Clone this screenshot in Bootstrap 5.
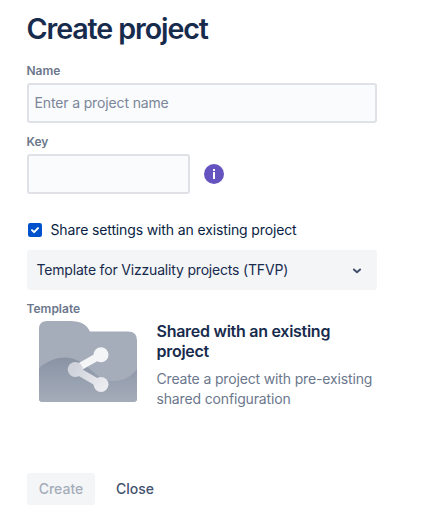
<!DOCTYPE html>
<html lang="en">
<head>
<meta charset="utf-8">
<meta name="viewport" content="width=device-width, initial-scale=1">
<title>Create project</title>
<link href="https://cdn.jsdelivr.net/npm/bootstrap@5.3.0/dist/css/bootstrap.min.css" rel="stylesheet">
<style>
body{font-family:Inter,"Liberation Sans",sans-serif;font-size:14px;line-height:20px;color:#172b4d;background:#fff}
.page{width:424px;height:527px;padding:13px 47px 0 27px;overflow:hidden}
.page-title{font-size:28.6px;line-height:32px;font-weight:600;letter-spacing:-1.08px;margin:0 0 18px -.5px}
.field-label{display:block;font-size:12px;line-height:16px;font-weight:600;color:#6b778c;letter-spacing:0;margin-left:-.5px}
.field-input{height:40px;border:2px solid #dfe1e6;border-radius:3px;background:#fafbfc;padding:0 5.5px 1px;font-size:14px;letter-spacing:-.14px}
.field-input::placeholder{color:#7a869a;opacity:1}
.key-label{margin-top:11px}
.key-input{width:163px}
.info{width:20px;height:20px;margin-left:14px}
.share-check{margin-top:26px;height:20px;padding-left:1px;color:#091e42;letter-spacing:-.13px}
.share-check svg{margin-right:8.5px}
.project-select{height:40px;margin-top:10px;border:0;border-radius:3px;background:#f4f5f7;padding:0 10px 1px 9.5px;color:#172b4d;font-size:14px;letter-spacing:-.18px}
.template-label{margin-top:11px}
.template-row{padding:4px 0 0 12px;height:156px}
.template-text{margin-left:19.500px;width:222px}
.template-title{font-size:16px;line-height:20px;font-weight:600;letter-spacing:-.27px;margin:0 0 8px}
.template-desc{color:#6b778c;letter-spacing:-.15px;margin:0}
.action{height:32px;padding:0;border:0;border-radius:3px;font-size:14px;line-height:32px;font-weight:500}
.action-create{width:68px;background:#f4f5f7;color:#a5adba}
.action-close{width:80px;color:#42526e}
</style>
</head>
<body>
<main class="page">
  <h1 class="page-title">Create project</h1>
  <label class="field-label" for="name">Name</label>
  <input class="field-input form-control mt-1" id="name" placeholder="Enter a project name">
  <label class="field-label key-label" for="key">Key</label>
  <div class="d-flex align-items-center mt-1">
    <input class="field-input form-control key-input" id="key">
    <svg class="info" viewBox="0 0 20 20"><circle cx="10" cy="10" r="10" fill="#6554c0"/><rect x="9" y="8" width="2" height="7" fill="#fff"/><rect x="9" y="5" width="2" height="2" rx=".3" fill="#fff"/></svg>
  </div>
  <div class="share-check d-flex align-items-center">
    <svg width="14" height="14" viewBox="0 0 14 14" role="checkbox" aria-checked="true"><rect width="14" height="14" rx="2.2" fill="#0052cc"/><path d="M4 7.1 6.1 9.1 10 5.1" fill="none" stroke="#fff" stroke-width="2" stroke-linecap="round" stroke-linejoin="round"/></svg>
    <span>Share settings with an existing project</span>
  </div>
  <button class="project-select btn w-100 d-flex align-items-center justify-content-between" type="button">
    <span>Template for Vizzuality projects (TFVP)</span>
    <svg width="20" height="20" viewBox="0 0 20 20"><path d="M6.9 9.500 10 12.300 13.1 9.500" fill="none" stroke="#42526e" stroke-width="2" stroke-linecap="round" stroke-linejoin="round"/></svg>
  </button>
  <div class="field-label template-label">Template</div>
  <div class="template-row d-flex align-items-start">
    <svg class="flex-shrink-0" width="98" height="82" viewBox="0 0 98 82">
      <defs>
        <linearGradient id="wave" x1="0" y1="0" x2="0" y2="1"><stop offset="0" stop-color="#8993a4"/><stop offset="1" stop-color="#a5adba"/></linearGradient>
        <linearGradient id="node" gradientUnits="userSpaceOnUse" x1="36" y1="46" x2="64" y2="66"><stop offset="0" stop-color="#d0d3db"/><stop offset="1" stop-color="#ebecf0"/></linearGradient>
        <clipPath id="shape"><path d="M0 8Q0 0 8 0H31C42 0 48 4 51 10.500H89Q98 10.500 98 19V78Q98 81 94 81H4Q0 81 0 78Z"/></clipPath>
      </defs>
      <g clip-path="url(#shape)">
        <rect width="98" height="82" fill="#a5adba"/>
        <path d="M0 47C15 34 32 33 46 44C57 53 62 60 75 60C85 60 93 55 98 48V82H0Z" fill="url(#wave)"/>
      </g>
      <path d="M36 48.500 62 33.700" stroke="#f4f5f7" stroke-width="7.500"/>
      <circle cx="62" cy="33.700" r="7.500" fill="#f4f5f7"/>
      <g fill="url(#node)">
        <circle cx="36.300" cy="48.500" r="7.600"/>
        <circle cx="62" cy="63.500" r="7.500"/>
        <path d="M36 48.500 62 63.500" stroke="url(#node)" stroke-width="7.500"/>
      </g>
    </svg>
    <div class="template-text">
      <h2 class="template-title">Shared with an existing<br>project</h2>
      <p class="template-desc">Create a project with pre-existing<br>shared configuration</p>
    </div>
  </div>
  <div class="d-flex">
    <button class="action action-create btn" type="button">Create</button>
    <button class="action action-close btn" type="button">Close</button>
  </div>
</main>
</body>
</html>
